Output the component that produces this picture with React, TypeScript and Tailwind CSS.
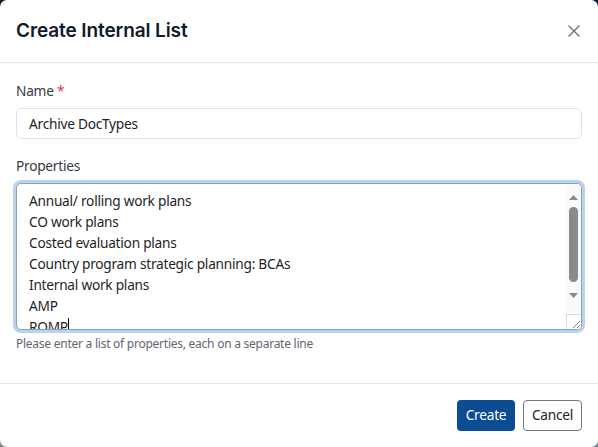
import { X } from "lucide-react";

const properties = [
  "Annual/ rolling work plans",
  "CO work plans",
  "Costed evaluation plans",
  "Country program strategic planning: BCAs",
  "Internal work plans",
  "AMP",
  "ROMP",
];

const FakeScrollbar = () => (
  <div className="absolute right-0 top-0 bottom-0 w-[15px] bg-[#fafafa] flex flex-col items-center">
    <svg width="15" height="15" viewBox="0 0 15 15" className="mt-[6px]">
      <path d="M3 10 L7.5 5 L12 10 Z" fill="#8a8a8a" />
    </svg>
    <div className="w-[9px] h-[75px] rounded-full bg-[#8a8a8a] mt-[2px]" />
    <svg width="15" height="15" viewBox="0 0 15 15" className="mt-[6px]">
      <path d="M3 5 L12 5 L7.5 10 Z" fill="#8a8a8a" />
    </svg>
    <div className="mt-auto w-[15px] h-[15px] border-l border-t border-[#dcdcdc] bg-white relative">
      <svg width="15" height="15" viewBox="0 0 15 15" className="absolute inset-0">
        <path d="M13 6 L6 13 M13 10 L10 13" stroke="#888" strokeWidth="1" />
      </svg>
    </div>
  </div>
);

export default function App() {
  return (
    <div className="w-[598px] h-[447px] bg-gradient-to-b from-[#0f1a33] to-[#7d8696] font-['Segoe_UI','Noto_Sans',sans-serif]">
      <div className="w-full h-full bg-white rounded-[7px] flex flex-col overflow-hidden">
        <header className="h-[63px] border-b border-[#e3e5ea] flex items-center justify-between pl-[16px] pr-[14px]">
          <h1 className="text-[19px] font-semibold text-[#111a2c] tracking-[-0.1px] font-['Inter',sans-serif]">
            Create Internal List
          </h1>
          <button className="text-[#6b7280]">
            <X size={20} strokeWidth={1.6} />
          </button>
        </header>

        <div className="flex-1 px-[16px] pt-[18px] tracking-[-0.25px]">
          <label className="block text-[13.7px] leading-[20px] text-[#333a44]">
            Name <span className="text-[#e0315b]">*</span>
          </label>
          <input
            readOnly
            value="Archive DocTypes"
            className="mt-[7px] w-full h-[31px] rounded-[5px] border border-[#e1e3e7] px-[12px] text-[13.7px] tracking-[-0.25px] text-[#222] outline-none"
          />

          <label className="block mt-[17px] text-[13.7px] leading-[20px] text-[#333a44]">
            Properties
          </label>
          <div className="mt-[7px] relative h-[147px] rounded-[5px] border border-[#7ea4cd] ring-[3px] ring-[#bdd2e8] overflow-hidden bg-white">
            <div className="pl-[12px] pt-[6px] text-[13.7px] leading-[21px] text-[#1f1f1f]">
              {properties.map((p, i) => (
                <div key={i}>
                  {p}
                  {i === properties.length - 1 && (
                    <span className="inline-block w-px h-[16px] bg-black align-[-2px]" />
                  )}
                </div>
              ))}
            </div>
            <FakeScrollbar />
          </div>
          <p className="mt-[6px] text-[12px] leading-[16px] text-[#5f6670]">
            Please enter a list of properties, each on a separate line
          </p>
        </div>

        <footer className="h-[64px] border-t border-[#e3e5ea] flex items-start justify-end gap-[8px] pt-[16px] pr-[16px] tracking-[-0.25px]">
          <button className="h-[31px] w-[58px] rounded-[4px] bg-[#0b4c93] text-white text-[13.7px]">
            Create
          </button>
          <button className="h-[31px] w-[59px] rounded-[4px] border border-[#6f7680] text-[#222] text-[13.7px] bg-white">
            Cancel
          </button>
        </footer>
      </div>
    </div>
  );
}
